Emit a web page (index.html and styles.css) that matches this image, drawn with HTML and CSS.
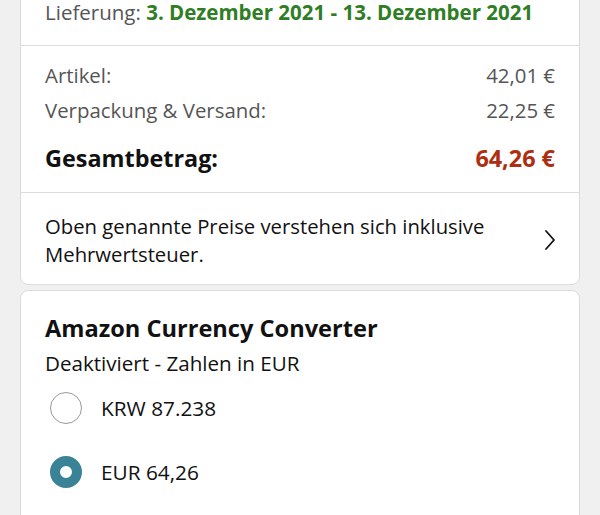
FILE: index.html
```html
<!DOCTYPE html>
<html lang="de">
<head>
<meta charset="utf-8">
<link rel="stylesheet" href="styles.css">
</head>
<body>
<div class="page">
  <div class="card first">
    <div class="section delivery">
      <p class="line">Lieferung: <span class="green">3. Dezember 2021 - 13. Dezember 2021</span></p>
    </div>
    <div class="section prices">
      <div class="row"><span>Artikel:</span><span>42,01 €</span></div>
      <div class="row"><span>Verpackung &amp; Versand:</span><span>22,25 €</span></div>
      <div class="row total"><span>Gesamtbetrag:</span><span class="red">64,26 €</span></div>
    </div>
    <div class="section vat">
      <p class="vat-text">Oben genannte Preise verstehen sich inklusive Mehrwertsteuer.</p>
      <svg class="chev" width="12" height="22" viewBox="0 0 12 22"><path d="M3 2 L11 11 L3 20" fill="none" stroke="#111" stroke-width="1.8" stroke-linecap="round" stroke-linejoin="round"/></svg>
    </div>
  </div>
  <div class="card second">
    <h2 class="title">Amazon Currency Converter</h2>
    <p class="sub">Deaktiviert - Zahlen in EUR</p>
    <div class="option"><span class="radio"></span><span>KRW 87.238</span></div>
    <div class="option"><span class="radio on"></span><span>EUR 64,26</span></div>
  </div>
</div>
</body>
</html>
```
FILE: styles.css
```css
* { box-sizing: border-box; }
html, body { margin: 0; padding: 0; }
body {
  background: #f0f0f0;
  font-family: "Open Sans", "Noto Sans", sans-serif;
  color: #111;
  width: 600px;
  height: 515px;
  overflow: hidden;
}
.page {
  padding: 0 20px;
  display: flex;
  flex-direction: column;
  gap: 5px;
  margin-top: -20px;
}
.card {
  background: #fff;
  border: 1px solid #dcdcdc;
  border-radius: 8px;
}
.section { padding: 0 24px; border-top: 1px solid #dcdcdc; }
.section:first-child { border-top: none; }
.delivery { height: 64px; padding-top: 17px; }
.line { margin: 0; font-size: 20.5px; line-height: 28px; color: #555; white-space: nowrap; }
.green { color: #2f7d25; font-weight: 700; }
.prices { padding-top: 12px; padding-bottom: 17px; }
.row {
  display: flex;
  justify-content: space-between;
  font-size: 20.4px;
  color: #555;
  line-height: 35px;
}
.row.total { font-size: 23.4px; font-weight: 700; color: #111; margin-top: 13px; line-height: 34px; }
.red { color: #ad2e10; }
.vat {
  display: flex;
  align-items: center;
  justify-content: space-between;
  padding-top: 19px;
  padding-bottom: 16px;
}
.vat-text { margin: 0; font-size: 20.3px; line-height: 28px; width: 470px; }
.second { padding: 22px 24px 40px; }
.title { margin: 0; font-size: 23.6px; font-weight: 700; line-height: 30px; }
.sub { margin: 7px 0 0; font-size: 20.6px; line-height: 26px; }
.option {
  display: flex;
  align-items: center;
  gap: 19px;
  font-size: 20.8px;
  height: 64px;
  padding-left: 5px;
}
.radio {
  width: 32px;
  height: 32px;
  border-radius: 50%;
  border: 1px solid #999;
  background: #fff;
  flex: none;
}
.radio.on {
  border: 10px solid #3a8296;
  background: #fff;
}
```
